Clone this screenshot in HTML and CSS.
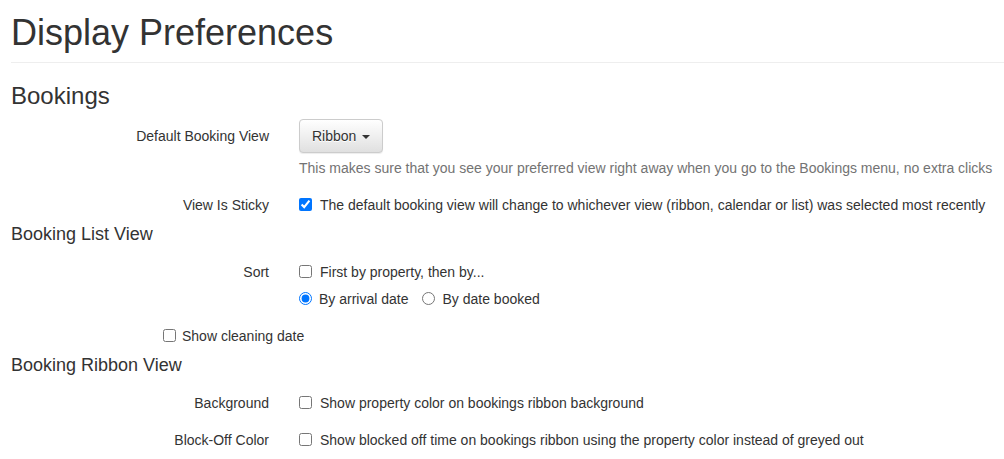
FILE: index.html
```html
<!DOCTYPE html>
<html lang="en">
<head>
  <meta charset="UTF-8">
  <meta name="viewport" content="width=device-width, initial-scale=1.0">
  <title>Display Preferences</title>
  <link rel="stylesheet" href="styles.css">
</head>
<body>
  <div class="page">
    <div class="page-header">
      <h1>Display Preferences</h1>
    </div>

    <h3>Bookings</h3>

    <div class="form-row">
      <label class="row-label with-btn">Default Booking View</label>
      <div class="row-controls">
        <button type="button" class="btn">Ribbon <span class="caret"></span></button>
        <p class="help">This makes sure that you see your preferred view right away when you go to the Bookings menu, no extra clicks</p>
      </div>
    </div>

    <div class="form-row check-row">
      <label class="row-label">View Is Sticky</label>
      <div class="row-controls">
        <label class="check"><input type="checkbox" checked> The default booking view will change to whichever view (ribbon, calendar or list) was selected most recently</label>
      </div>
    </div>

    <h4>Booking List View</h4>

    <div class="form-row check-row">
      <label class="row-label">Sort</label>
      <div class="row-controls">
        <label class="check"><input type="checkbox"> First by property, then by...</label>
        <div class="radios">
          <label class="radio"><input type="radio" name="sort" checked> By arrival date</label>
          <label class="radio"><input type="radio" name="sort"> By date booked</label>
        </div>
      </div>
    </div>

    <div class="form-row check-row offset">
      <label class="check tight"><input type="checkbox"> Show cleaning date</label>
    </div>

    <h4>Booking Ribbon View</h4>

    <div class="form-row check-row">
      <label class="row-label">Background</label>
      <div class="row-controls">
        <label class="check"><input type="checkbox"> Show property color on bookings ribbon background</label>
      </div>
    </div>

    <div class="form-row check-row">
      <label class="row-label">Block-Off Color</label>
      <div class="row-controls">
        <label class="check"><input type="checkbox"> Show blocked off time on bookings ribbon using the property color instead of greyed out</label>
      </div>
    </div>
  </div>
</body>
</html>
```

FILE: styles.css
```css
body {
  font-family: "Liberation Sans", Arial, sans-serif;
  font-size: 14px;
  line-height: 20px;
  color: #333;
  margin: 0;
  background: #fff;
}
.page {
  padding-left: 11px;
}
.page-header {
  padding-bottom: 9px;
  border-bottom: 1px solid #eee;
}
h1 {
  margin: 13px 0 0;
  font-size: 36px;
  line-height: 1.1;
  font-weight: 400;
}
h3 {
  margin: 20px 0 10px;
  font-size: 24px;
  line-height: 1.1;
  font-weight: 400;
}
h4 {
  margin: 10px 0 10px;
  font-size: 18px;
  line-height: 1.1;
  font-weight: 400;
}
.form-row {
  display: flex;
  align-items: flex-start;
}
.row-label {
  width: 258px;
  margin-right: 30px;
  text-align: right;
  flex-shrink: 0;
}
.row-label.with-btn {
  padding-top: 7px;
}
.row-controls {
  flex: 1;
}
.btn {
  font-family: inherit;
  font-size: 14px;
  line-height: 20px;
  color: #333;
  padding: 6px 12px;
  border: 1px solid #ccc;
  border-radius: 4px;
  background-image: linear-gradient(to bottom, #fff 0, #e0e0e0 100%);
  text-shadow: 0 1px 0 #fff;
  box-shadow: inset 0 1px 0 rgba(255, 255, 255, .15), 0 1px 1px rgba(0, 0, 0, .075);
  cursor: pointer;
}
.caret {
  display: inline-block;
  width: 0;
  height: 0;
  margin-left: 2px;
  vertical-align: middle;
  border-top: 4px solid;
  border-right: 4px solid transparent;
  border-left: 4px solid transparent;
}
.help {
  margin: 5px 0 0;
  color: #737373;
}
.check-row {
  margin-top: 10px;
  padding-top: 7px;
}
.check, .radio {
  display: flex;
  align-items: center;
  gap: 8px;
}
.check input, .radio input {
  margin: 0;
  width: 13px;
  height: 13px;
}
.radio {
  gap: 7px;
}
.radios {
  display: flex;
  margin-top: 7px;
}
.radios .radio + .radio {
  margin-left: 14px;
}
.offset {
  padding-left: 152px;
}
.check.tight {
  gap: 6px;
}
```
